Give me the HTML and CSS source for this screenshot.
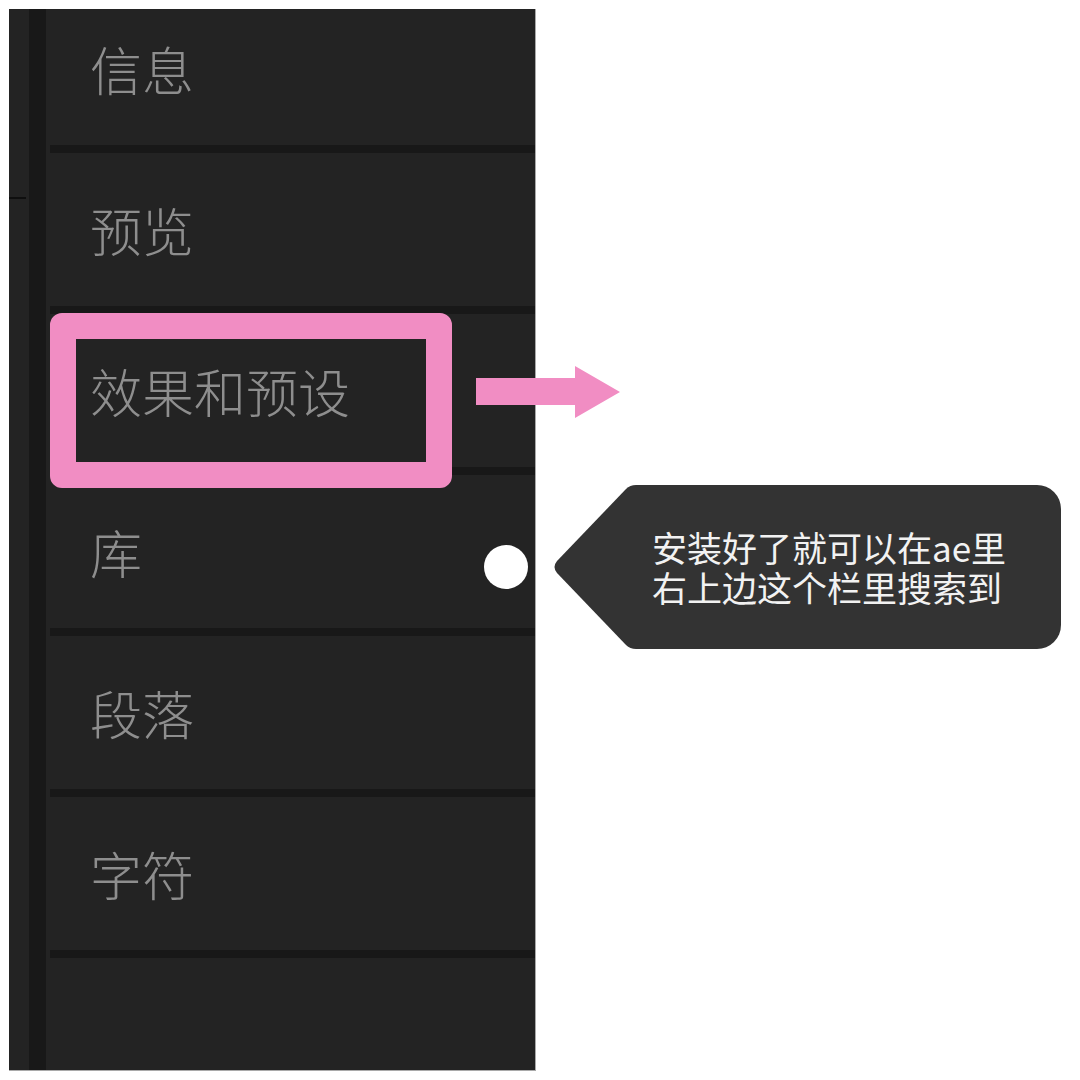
FILE: index.html
```html
<!DOCTYPE html>
<html lang="zh-CN">
<head>
<meta charset="utf-8">
<title>效果和预设</title>
<link rel="stylesheet" href="styles.css">
</head>
<body>
<div class="stage">
  <div class="panel">
    <div class="gutter"><div class="tick"></div></div>
    <div class="bar"></div>
    <div class="list">
      <div class="row first"><span class="label">信息</span></div>
      <div class="rule"></div>
      <div class="row"><span class="label">预览</span></div>
      <div class="rule"></div>
      <div class="row"><span class="label">效果和预设</span></div>
      <div class="rule"></div>
      <div class="row"><span class="label">库</span></div>
      <div class="rule"></div>
      <div class="row"><span class="label">段落</span></div>
      <div class="rule"></div>
      <div class="row"><span class="label">字符</span></div>
      <div class="rule"></div>
      <div class="row"></div>
    </div>
  </div>

  <div class="highlight"></div>

  <svg class="arrow" width="144" height="52" viewBox="0 0 144 52">
    <polygon points="0,12 99,12 99,0 144,26 99,52 99,39 0,39" fill="#f18dc3"/>
  </svg>

  <div class="dot"></div>

  <div class="tip">
    <svg class="tip-bg" width="509" height="164" viewBox="0 0 509 164">
      <path d="M84 0 H485 A24 24 0 0 1 509 24 V140 A24 24 0 0 1 485 164 H84 Q78 164 74 160 L5 88 Q0 82 5 76 L74 4 Q78 0 84 0 Z" fill="#333333"/>
    </svg>
    <div class="tip-text">
      <p class="tip-line">安装好了就可以在ae里</p>
      <p class="tip-line">右上边这个栏里搜索到</p>
    </div>
  </div>
</div>
</body>
</html>
```

FILE: styles.css
```css
html, body {
  margin: 0;
  padding: 0;
  background: #ffffff;
}

.stage {
  position: relative;
  width: 1080px;
  height: 1080px;
  overflow: hidden;
  padding: 9px 0 0 9px;
  box-sizing: border-box;
}

.panel {
  display: flex;
  width: 526px;
  height: 1061px;
  background: #232323;
  border-right: 1px solid #a9a9a9;
  border-bottom: 1px solid #a9a9a9;
  overflow: hidden;
}

.gutter {
  width: 20px;
  flex: none;
  background: #232323;
  display: flex;
  flex-direction: column;
  padding-top: 188px;
  box-sizing: border-box;
}

.tick {
  width: 17px;
  height: 2px;
  background: #0f0f0f;
}

.bar {
  width: 17px;
  flex: none;
  background: #181818;
}

.list {
  flex: 1;
  display: flex;
  flex-direction: column;
  margin-top: -17px;
}

.row {
  height: 153px;
  flex: none;
  display: flex;
  align-items: center;
  padding-left: 44px;
}

.rule {
  height: 8px;
  flex: none;
  margin-left: 4px;
  background: #181818;
}

.label {
  font-family: "Noto Sans CJK SC", "Noto Sans", sans-serif;
  font-size: 52px;
  font-weight: 300;
  line-height: 1;
  color: #8e8e8e;
}

.highlight {
  position: absolute;
  left: 50px;
  top: 313px;
  width: 402px;
  height: 175px;
  box-sizing: border-box;
  border: 26px solid #f18dc3;
  border-radius: 12px;
}

.arrow {
  position: absolute;
  left: 476px;
  top: 366px;
  display: block;
}

.dot {
  position: absolute;
  left: 484px;
  top: 545px;
  width: 44px;
  height: 44px;
  border-radius: 50%;
  background: #ffffff;
}

.tip {
  position: absolute;
  left: 552px;
  top: 485px;
  width: 509px;
  height: 164px;
  display: flex;
  align-items: center;
  padding-left: 100px;
  box-sizing: border-box;
}

.tip-bg {
  position: absolute;
  left: 0;
  top: 0;
  display: block;
}

.tip-text {
  position: relative;
  display: flex;
  flex-direction: column;
  gap: 4px;
}

.tip-line {
  margin: 0;
  height: 36px;
  font-family: "Noto Sans CJK SC", "Noto Sans", sans-serif;
  font-size: 35px;
  line-height: 36px;
  color: #f2f2f2;
  white-space: nowrap;
}
```
